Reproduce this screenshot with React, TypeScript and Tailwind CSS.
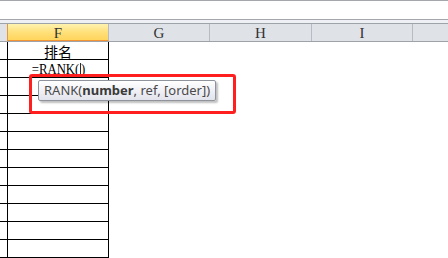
import React from "react";

const rows = Array.from({ length: 12 }, (_, i) => i);

export default function App() {
  return (
    <div className="relative w-[448px] h-[258px] overflow-hidden bg-white">
      {/* formula bar remnant */}
      <div className="h-[20px] border-t border-b border-[#a3a6ab] bg-white" />
      <div className="h-[3px] bg-[#eef0f3]" />
      {/* column header */}
      <div className="flex h-[19px] border-t border-b border-[#9ea3a9] bg-[#dfe3e8] text-[#333] text-[15px] leading-[18px] font-['Liberation_Serif',serif]">
        <div className="w-[8px] border-r border-[#e39a3c]" />
        <div className="w-[101px] border-r border-[#b8bcc2] bg-gradient-to-b from-[#fff3b0] via-[#ffe07a] to-[#ffd55c] border-b border-b-[#f29436] text-center">
          F
        </div>
        <div className="w-[101px] border-r border-[#b8bcc2] text-center">G</div>
        <div className="w-[102px] border-r border-[#b8bcc2] text-center">H</div>
        <div className="w-[101px] border-r border-[#b8bcc2] text-center">I</div>
        <div className="flex-1" />
      </div>
      {/* body */}
      <div className="flex flex-col">
        {rows.map((i) => (
          <div key={i} className="flex h-[18px]">
            <div className="w-[7px] border-b border-black" />
            <div className="w-[102px] border-l border-r border-b border-black flex items-end justify-center overflow-visible">
              {i === 0 && (
                <span className="text-[14px] leading-[16px] text-black font-['Noto_Sans_CJK_SC',sans-serif]">
                  排名
                </span>
              )}
              {i === 1 && (
                <span className="text-[15px] leading-[15px] text-black flex items-center scale-x-[0.85] font-['Liberation_Serif',serif]">
                  <span>=RANK(</span>
                  <span className="inline-block w-px h-[13px] bg-black ml-[1px]" />
                  <span>)</span>
                </span>
              )}
            </div>
            <div className="flex-1" />
          </div>
        ))}
      </div>

      {/* red annotation */}
      <div className="absolute left-[29px] top-[74px] w-[207px] h-[40px] border-[3px] border-[#ff1f1f] rounded-[3px]" />

      {/* tooltip */}
      <div className="absolute left-[38px] top-[80px] h-[21px] px-[5px] flex items-center border border-[#8f949c] rounded-[2px] bg-gradient-to-b from-white to-[#e2e3ec] text-[#4a4a4a] text-[13px] leading-none whitespace-nowrap shadow-[2px_2px_2px_rgba(0,0,0,0.25)] font-['Noto_Sans',sans-serif]">
        RANK(<b className="font-bold text-[#3a3a3a]">number</b>, ref, [order])
      </div>
    </div>
  );
}
